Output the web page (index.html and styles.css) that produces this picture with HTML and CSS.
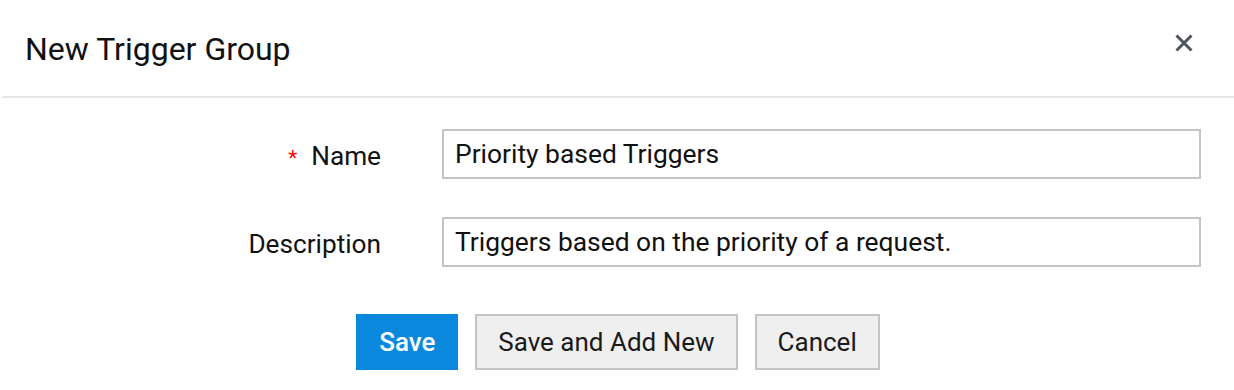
FILE: index.html
```html
<!DOCTYPE html>
<html>
<head>
<meta charset="utf-8">
<link rel="stylesheet" href="styles.css">
</head>
<body>
<div class="dialog">
  <div class="header">
    <h1 class="title">New Trigger Group</h1>
    <button class="close" aria-label="Close">
      <svg width="18" height="18" viewBox="0 0 18 18"><path d="M1.5 1.5 L16.5 16.5 M16.5 1.5 L1.5 16.5" stroke="#4c565e" stroke-width="3" stroke-linecap="butt"/></svg>
    </button>
  </div>
  <div class="divider"></div>
  <form class="form">
    <label class="label"><span class="req">*</span>Name</label>
    <div class="field">Priority based Triggers</div>
    <label class="label">Description</label>
    <div class="field">Triggers based on the priority of a request.</div>
  </form>
  <div class="actions">
    <button class="btn primary">Save</button>
    <button class="btn">Save and Add New</button>
    <button class="btn">Cancel</button>
  </div>
</div>
</body>
</html>
```
FILE: styles.css
```css
* { box-sizing: border-box; }
html, body { margin: 0; padding: 0; background: #fff; }
body { font-family: Roboto, "Noto Sans", sans-serif; color: #1a1a1a; }
.dialog { width: 1234px; height: 390px; }
.header {
  height: 96px;
  display: flex;
  align-items: center;
  justify-content: space-between;
  padding: 0 41px 0 25px;
}
.title { margin: 0; font-size: 32px; font-weight: 400; color: #111; position: relative; top: 1px; }
.close { background: none; border: 0; padding: 0; width: 18px; height: 18px; display: block; position: relative; top: -5px; }
.close svg { display: block; }
.divider { height: 2px; background: #e6e6e6; margin-left: 2px; }
.form {
  display: grid;
  grid-template-columns: 381px 759px;
  column-gap: 61px;
  row-gap: 38px;
  padding-top: 31px;
  align-items: center;
}
.label { font-size: 26.2px; text-align: right; color: #111; position: relative; top: 2px; }
.req { color: #ff0000; font-size: 21px; margin-right: 14px; position: relative; top: 0; }
.field {
  height: 50px;
  border: 2px solid #c4c4c4;
  padding: 0 11px;
  display: flex;
  align-items: center;
  font-size: 26.4px;
  color: #111;
}
.actions {
  display: flex;
  justify-content: center;
  gap: 17px;
  margin-top: 47px;
  padding-left: 2px;
}
.btn {
  height: 56px;
  font-family: Roboto, "Noto Sans", sans-serif;
  font-size: 26px;
  color: #1a1a1a;
  background: #efefef;
  border: 2px solid #c4c4c4;
  padding: 0 21px;
}
.btn.primary {
  background: #0a88dd;
  border-color: #0a88dd;
  color: #fff;
  font-weight: 500;
  width: 102px;
  padding: 0;
}
```
